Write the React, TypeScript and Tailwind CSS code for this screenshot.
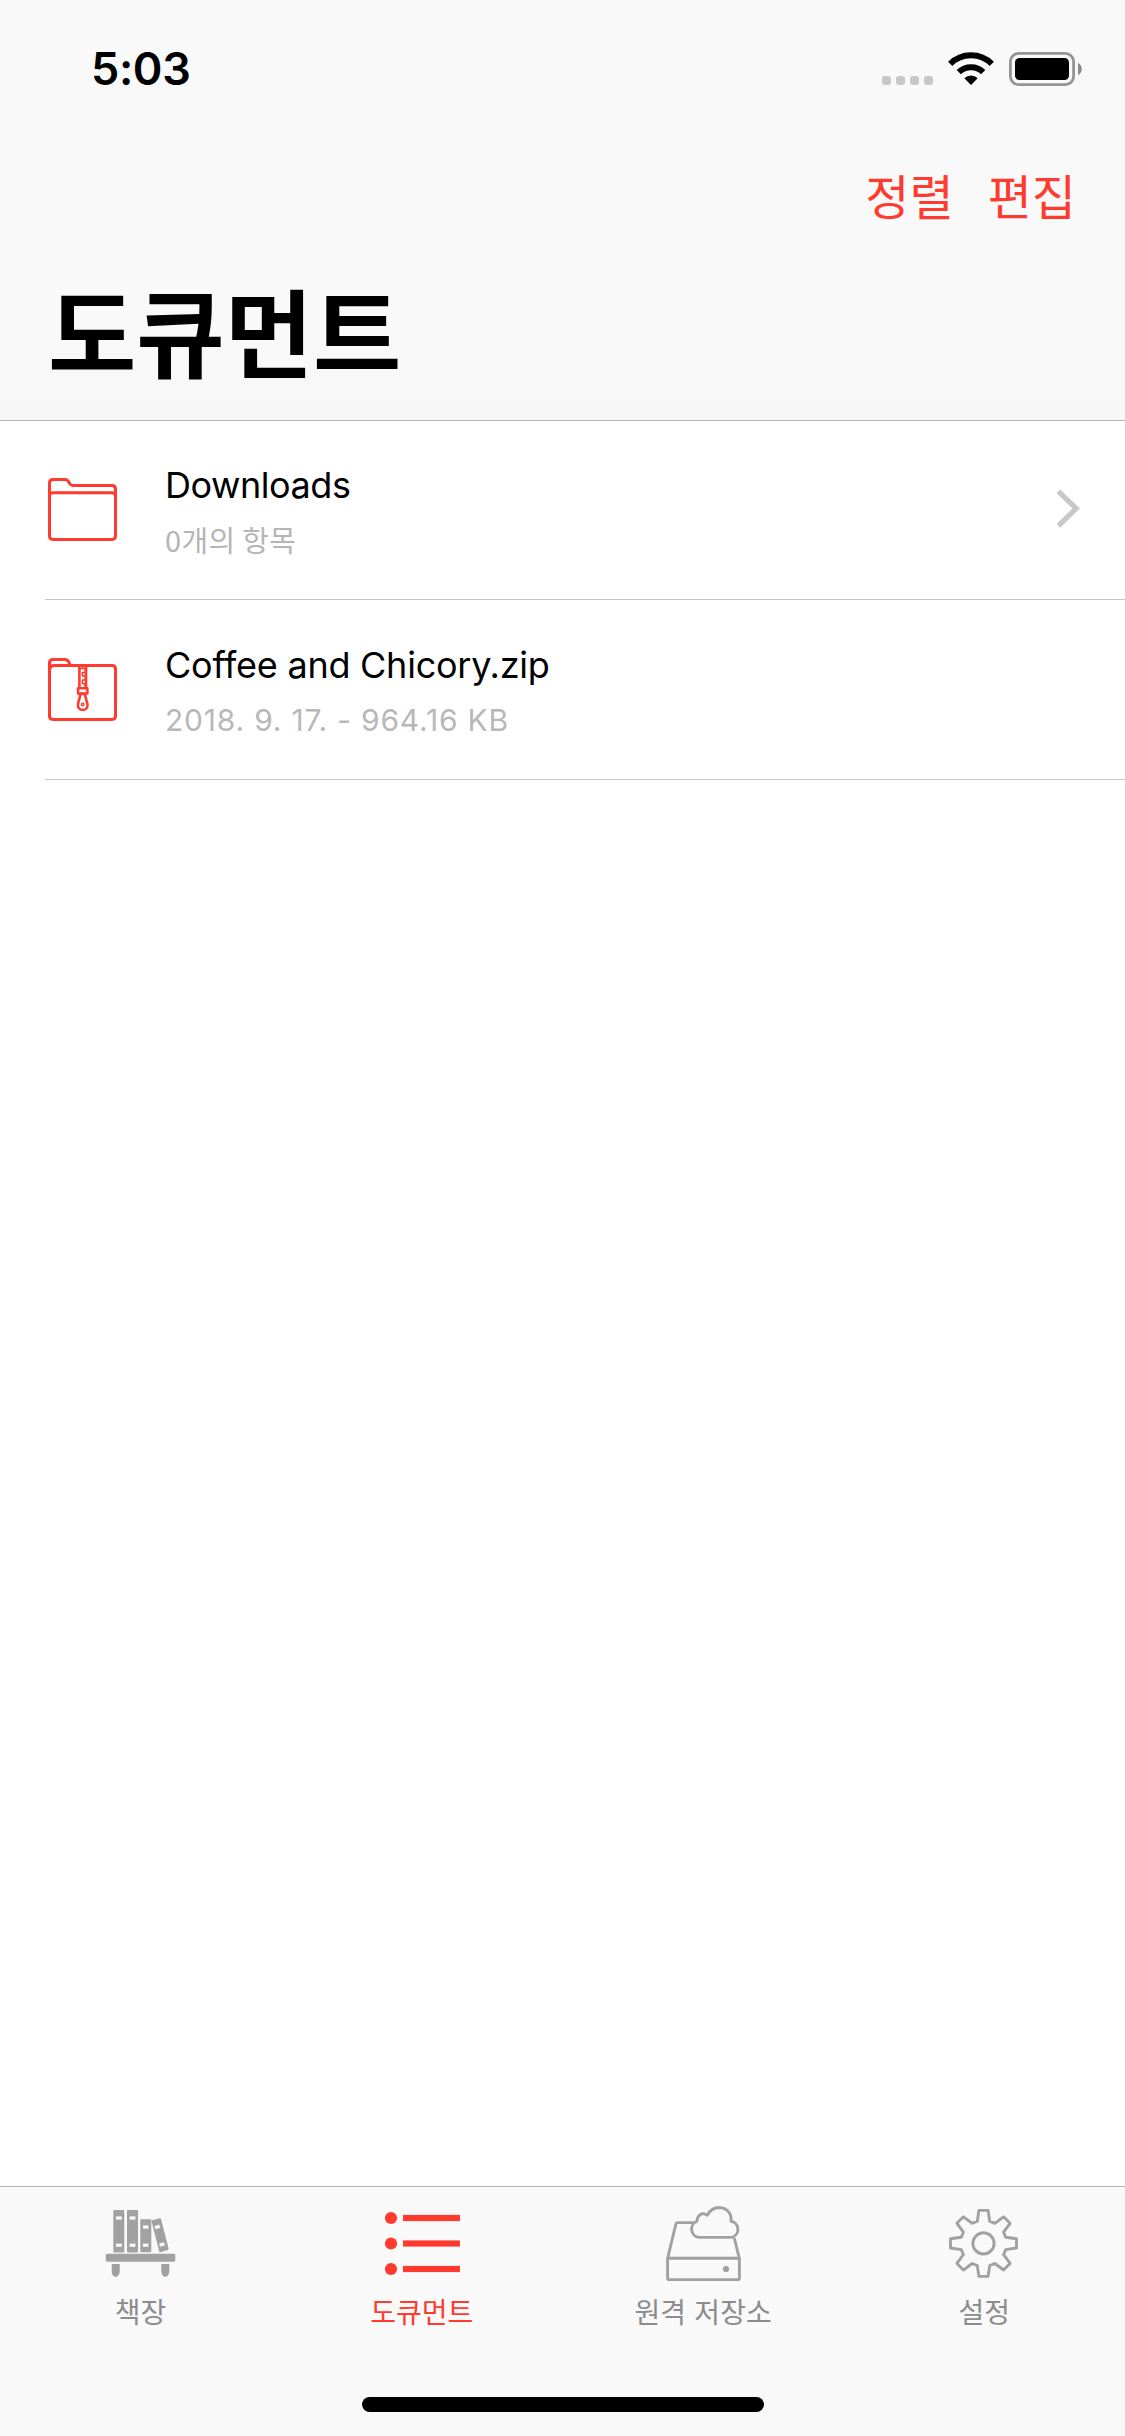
import React from 'react';

const LATIN = 'font-["Inter","Noto_Sans_CJK_KR",sans-serif]';
const KOREAN = 'font-["Noto_Sans_CJK_KR",sans-serif]';

function WifiIcon() {
  return (
    <svg width="46" height="33" viewBox="0 0 46 33" className="ml-[15px] overflow-visible">
      <path d="M23 33 L16.3 26.3 A9.6 9.6 0 0 1 29.7 26.3 Z" />
      <path d="M10.8 20.2 A17.3 17.3 0 0 1 35.2 20.2" fill="none" stroke="#000" strokeWidth="6" />
      <path d="M2.2 11.8 A29.4 29.4 0 0 1 43.8 11.8" fill="none" stroke="#000" strokeWidth="6" />
    </svg>
  );
}

function BatteryIcon() {
  return (
    <svg width="73" height="34" viewBox="0 0 73 34" className="ml-[15px]">
      <rect x="1.4" y="1.4" width="63.2" height="31.2" rx="8.4" fill="none" stroke="#949494" strokeWidth="2.8" />
      <rect x="6" y="6" width="54" height="22" rx="4.5" />
      <path d="M69 11 C74 13 74 21 69 23 Z" fill="#8a8a8a" />
    </svg>
  );
}

function StatusBar() {
  return (
    <div className="flex h-[96px] items-start pl-[91px] pr-[43px]">
      <span className={`mt-[41px] text-[45px] leading-[55px] font-semibold tracking-[-0.4px] ${LATIN}`}>5:03</span>
      <div className="mt-[52px] ml-auto flex items-start">
        <div className="mt-[24px] flex gap-[5px]">
          {[0, 1, 2, 3].map((i) => (
            <div key={i} className="size-[9px] rounded-[3px] bg-[#c7c7c7]" />
          ))}
        </div>
        <WifiIcon />
        <BatteryIcon />
      </div>
    </div>
  );
}

function FolderIcon() {
  return (
    <svg width="69" height="63" viewBox="0 0 69 63" fill="none" stroke="#ff3b30" strokeWidth="3" strokeLinejoin="round">
      <path d="M1.5 58 V5 Q1.5 1.5 5 1.5 H17 Q19 1.5 20.3 3.3 L22 6 Q23 7.4 25 7.4 H64 Q67.5 7.4 67.5 10.9 V58 Q67.5 61.4 64 61.4 H5 Q1.5 61.4 1.5 58 Z" />
      <path d="M1.5 18 Q1.5 14.8 5 14.8 H64 Q67.5 14.8 67.5 18" />
    </svg>
  );
}

function ZipIcon() {
  return (
    <svg width="69" height="63" viewBox="0 0 69 63" fill="none" stroke="#ff3b30" strokeWidth="3" strokeLinejoin="round">
      <path d="M1.5 58 V5 Q1.5 1.5 5 1.5 H17 Q19 1.5 20.3 3.3 L22.5 7.4 H64 Q67.5 7.4 67.5 11 V58 Q67.5 61.4 64 61.4 H5 Q1.5 61.4 1.5 58 Z" />
      <path d="M2 11 Q2 7.4 6 7.4 H24" />
      <path d="M31.4 8 V30 M38 8 V30" strokeWidth="2.6" />
      <path d="M34.7 8 v2.5 h-2.5 M34.7 10.5 h2.5 v4 h-2.8 v3.6 h2.8 v4 h-2.8 v3.6 h2.8 v4" strokeWidth="1.5" />
      <rect x="30" y="30.2" width="9.4" height="5.2" strokeWidth="2.5" />
      <path d="M32.3 36 C32 41 29.9 44 29.9 47.2 A4.8 4.8 0 0 0 39.5 47.2 C39.5 44 37.4 41 37.1 36 Z" strokeWidth="2.6" />
      <circle cx="34.7" cy="46.4" r="1.2" strokeWidth="1.4" />
    </svg>
  );
}

function Chevron() {
  return (
    <svg width="25" height="40" viewBox="0 0 25 40" fill="none" stroke="#c7c7cc" strokeWidth="5.2" className="mt-[68px] mr-[44px] ml-auto">
      <path d="M2.4 2.3 L20.2 19.5 L2.4 36.9" />
    </svg>
  );
}

function BooksIcon() {
  return (
    <svg width="75" height="75" viewBox="0 0 75 75" fill="#a1a1a1">
      <rect x="10.3" y="4" width="11" height="42.4" rx="1" />
      <rect x="24" y="4" width="11" height="42.4" rx="1" />
      <rect x="37.3" y="13.3" width="11" height="33" rx="1" />
      <path d="M48.6 15.6 Q48.4 14.6 49.4 14.3 L56.8 12.3 Q57.8 12.1 58 13 L65.6 42.6 Q65.8 43.6 64.9 43.9 L57.4 46.2 Q56.4 46.4 56.2 45.4 Z" />
      <rect x="2.7" y="47.7" width="69.6" height="8" rx="1.6" />
      <path d="M8.7 58 h8 v8 q0 3 -3 4.7 h-2 q-3 -1.7 -3 -4.7 Z M58.3 58 h8 v8 q0 3 -3 4.7 h-2 q-3 -1.7 -3 -4.7 Z" />
      <g fill="#f9f9f9">
        <rect x="13" y="10.4" width="5.8" height="3.2" />
        <rect x="13" y="37.6" width="5.8" height="3.2" />
        <rect x="26.6" y="10.4" width="5.8" height="3.2" />
        <rect x="26.6" y="37.6" width="5.8" height="3.2" />
        <rect x="40" y="19.4" width="5.4" height="3.2" />
        <rect x="40" y="37.6" width="5.4" height="3.2" />
        <rect x="51.8" y="19.4" width="5" height="3.2" transform="rotate(-15 54.3 21)" />
        <rect x="56.5" y="36.9" width="5" height="3.2" transform="rotate(-15 59 38.5)" />
      </g>
    </svg>
  );
}

function ListIcon() {
  return (
    <svg width="75" height="75" viewBox="0 0 75 75" fill="#ff3b30" className="overflow-visible">
      {[12, 37.5, 63].map((y) => (
        <g key={y}>
          <circle cx="7" cy={y} r="6.1" />
          <rect x="19" y={y - 3.1} width="57" height="6.2" />
        </g>
      ))}
    </svg>
  );
}

function DriveIcon() {
  return (
    <svg width="75" height="75" viewBox="0 0 75 75" fill="none" stroke="#a1a1a1" strokeWidth="2.9" strokeLinejoin="round">
      <path d="M1.6 52.2 H73.4 V72.2 Q73.4 73.7 72 73.7 H3 Q1.6 73.7 1.6 72.2 Z" />
      <path d="M1.7 52 L9.9 18 Q10.3 16.6 11.8 16.6 H28 M68.3 32 L73.2 52" />
      <circle cx="60" cy="63" r="3.1" fill="#a1a1a1" stroke="none" />
      <path d="M33 31.4 A8.4 8.4 0 0 1 31 15.2 C31.4 8.6 36.4 5.8 41.2 9.2 C44.6 3.6 48.6 1.5 53 1.5 C61 1.8 66 7.6 65 15.2 A8.3 8.3 0 0 1 65.8 31.4 Z" />
    </svg>
  );
}

function gearOutline() {
  const tooth: [number, number][] = [[-6.2, -22.2], [-4.6, -33], [4.6, -33], [6.2, -22.2]];
  const points: string[] = [];
  for (let i = 0; i < 8; i++) {
    const a = (i * Math.PI) / 4;
    for (const [x, y] of tooth) {
      const px = 36.5 + x * Math.cos(a) - y * Math.sin(a);
      const py = 37.4 + x * Math.sin(a) + y * Math.cos(a);
      points.push(`${px.toFixed(2)} ${py.toFixed(2)}`);
    }
  }
  return `M${points.join(' L')} Z`;
}

function GearIcon() {
  return (
    <svg width="75" height="75" viewBox="0 0 75 75" fill="none" stroke="#a1a1a1" strokeWidth="2.9" strokeLinejoin="round">
      <path d={gearOutline()} />
      <circle cx="36.5" cy="37.4" r="10.6" />
    </svg>
  );
}

const tabs = [
  { label: '책장', icon: <BooksIcon />, color: 'text-[#8c8c8c]' },
  { label: '도큐먼트', icon: <ListIcon />, color: 'text-[#ff3b30]' },
  { label: '원격 저장소', icon: <DriveIcon />, color: 'text-[#8c8c8c]' },
  { label: '설정', icon: <GearIcon />, color: 'text-[#8c8c8c]' },
];

export default function App() {
  return (
    <div className="flex h-[2436px] w-[1125px] flex-col overflow-hidden bg-white text-black">
      <header className="h-[421px] shrink-0 border-b border-[#b2b2b2] bg-linear-to-b from-[#f9f9f9] from-80% to-[#f7f7f7]">
        <StatusBar />
        <div className={`mt-[63px] flex justify-end pr-[49px] text-[48px] leading-[70px] text-[#ff3b30] ${KOREAN}`}>
          <span>정렬</span>
          <span className="ml-[34px]">편집</span>
        </div>
        <h1 className={`mt-[30px] pl-[48px] text-[96px] leading-[139px] font-bold ${KOREAN}`}>도큐먼트</h1>
      </header>

      <main className="flex-1">
        <div className="ml-[45px] flex h-[179px] items-start border-b border-[#c8c7cc]">
          <div className="mt-[57px] ml-[3px]"><FolderIcon /></div>
          <div className="mt-[42px] ml-[48px]">
            <div className={`text-[36px] leading-[44px] tracking-[-0.45px] ${LATIN}`}>Downloads</div>
            <div className={`mt-[14px] text-[29px] leading-[36px] tracking-[0.3px] text-[#b5b5b5] ${KOREAN}`}>0개의 항목</div>
          </div>
          <Chevron />
        </div>
        <div className="ml-[45px] flex h-[180px] items-start border-b border-[#c8c7cc]">
          <div className="mt-[58px] ml-[3px]"><ZipIcon /></div>
          <div className="mt-[43px] ml-[48px]">
            <div className={`text-[36px] leading-[44px] tracking-[-0.25px] ${LATIN}`}>Coffee and Chicory.zip</div>
            <div className={`mt-[15px] text-[30px] leading-[36px] tracking-[0.8px] text-[#b8b8b8] ${LATIN}`}>2018. 9. 17. - 964.16 KB</div>
          </div>
        </div>
      </main>

      <footer className="flex h-[250px] shrink-0 flex-col border-t border-[#b2b2b2] bg-[#f9f9f9]">
        <nav className="grid grid-cols-4 pt-[19px]">
          {tabs.map((tab) => (
            <div key={tab.label} className={`flex flex-col items-center ${tab.color}`}>
              {tab.icon}
              <span className={`mt-[10px] text-[28px] leading-[41px] [word-spacing:2px] ${KOREAN}`}>{tab.label}</span>
            </div>
          ))}
        </nav>
        <div className="mt-auto mb-[24px] ml-[362px] h-[15px] w-[402px] rounded-full bg-black" />
      </footer>
    </div>
  );
}
